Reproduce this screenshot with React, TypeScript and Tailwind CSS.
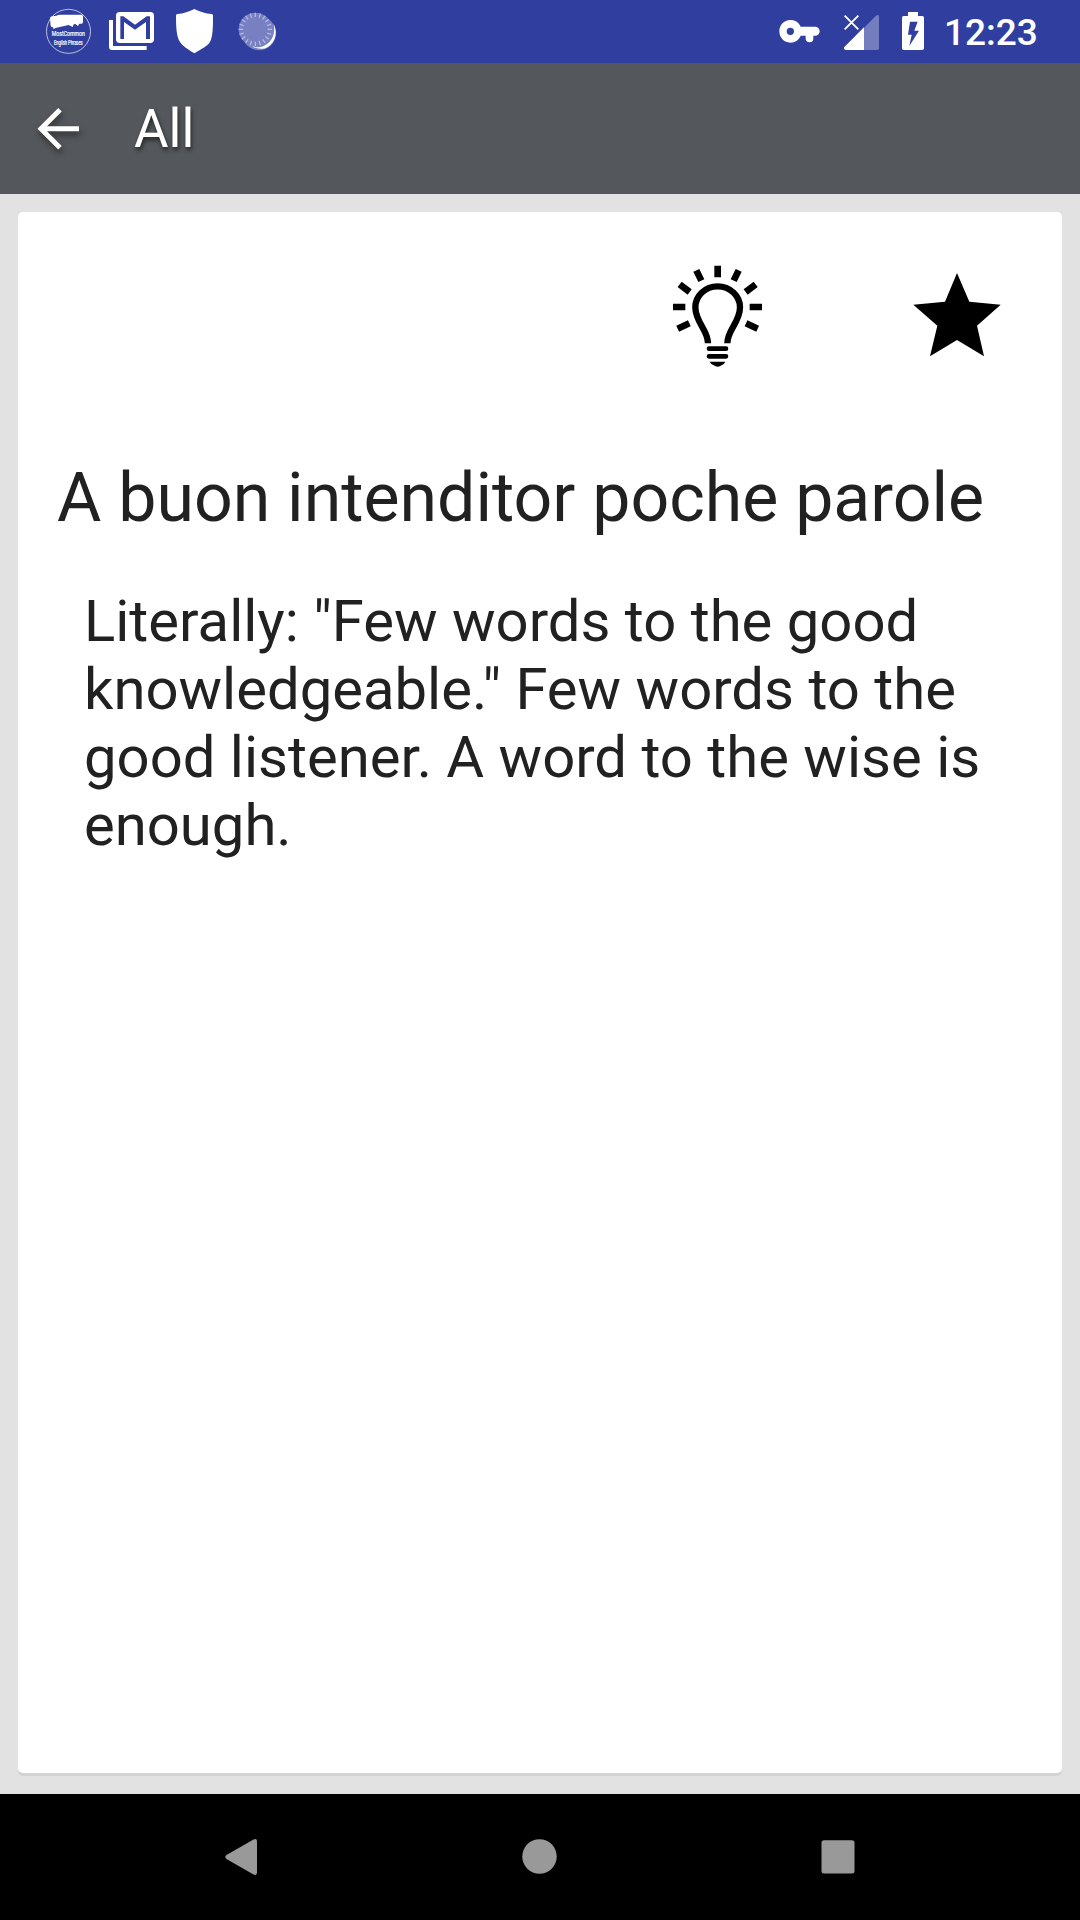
import React from 'react'

interface Phrase {
  category: string
  title: string
  meaning: string
}

const phrase: Phrase = {
  category: 'All',
  title: 'A buon intenditor poche parole',
  meaning:
    'Literally: "Few words to the good knowledgeable." Few words to the good listener. A word to the wise is enough.'
}

const rays = Array.from({ length: 20 }, (_, i) => i * 18)

const StatusBar: React.FC = () => (
  <div className="flex h-[63px] items-start bg-[#303f9f] text-white">
    {/* app logo */}
    <svg className="mt-2 ml-[45px] h-[47px] w-[47px] overflow-visible" viewBox="45 24 141 141">
      <circle cx="115.5" cy="94" r="66" fill="none" stroke="#fff" strokeOpacity="0.8" strokeWidth="2.5" />
      <path
        fill="#fff"
        d="M90 44h64q5 0 5 5v17q0 5-5 5h-6l-4 7-8-6-5 1-3 8-12-6-40 9-5 4-2-6q-6 0-7-5l-2-22q0-5 6-6l14-2q2-3 10-3z"
      />
      <g className="fill-white stroke-white text-[20px]" strokeWidth="0.6" textAnchor="middle">
        <text x="115" y="109" textLength="99" lengthAdjust="spacingAndGlyphs">
          MostCommon
        </text>
        <text x="115" y="135" textLength="86" lengthAdjust="spacingAndGlyphs">
          English Phrases
        </text>
      </g>
    </svg>
    {/* mail */}
    <svg className="mt-[11px] ml-4 h-10 w-[47px]" viewBox="234 33 141 120">
      <path fill="#fff" d="M237 60h12v78h101v12H247q-10 0-10-10z" />
      <path
        fill="#fff"
        fillRule="evenodd"
        d="M269 36h92q11 0 11 11v71q0 11-11 11h-92q-11 0-11-11V47q0-11 11-11zM271 49v68h11V66l33 23 33-23v51h12V49h-10l-35 25-35-25z"
      />
    </svg>
    {/* shield */}
    <svg className="mt-2 ml-5 h-[46px] w-[39px]" viewBox="435 24 117 138">
      <path
        fill="#fff"
        d="M493 27c15 8 33 14 52 15q4 1 4 5c0 32 0 62-9 79-6 11-26 21-47 34-21-13-36-23-43-34-11-17-12-47-12-79q0-4 4-5c19-1 36-7 51-15z"
      />
    </svg>
    {/* sync dial */}
    <svg className="mt-[11px] ml-[23px] h-10 w-10" viewBox="621 33 120 120">
      <circle cx="687" cy="100" r="51" fill="#fff" fillOpacity="0.35" />
      <path fill="#fff" d="M731 72c5 28-3 48-21 61-14 10-29 11-44 5 8 8 33 13 49 2 21-14 29-42 16-68z" />
      <circle cx="676" cy="88" r="50" fill="#7880c1" />
      <g stroke="#b4b8dd" strokeWidth="4">
        {rays.map(angle => (
          <path key={angle} d="M676 38v13" transform={`rotate(${angle} 676 88)`} />
        ))}
      </g>
    </svg>

    {/* vpn key */}
    <svg className="mt-[19px] ml-auto h-[25px] w-[43px]" viewBox="54 57 129 75">
      <path
        fill="#fff"
        fillRule="evenodd"
        d="M91 60c15 0 26 8 31 20h43c8 0 14 6 14 14s-6 13-11 13h-8v10c0 6-5 10-11 10s-12-4-12-10v-10h-15c-5 12-16 21-31 21-19 0-33-15-33-34s14-34 33-34zm0 23a11 11 0 1 0 0 22 11 11 0 0 0 0-22z"
      />
    </svg>
    {/* mobile signal */}
    <svg className="mt-[14px] ml-[22px] h-[37px] w-[37px]" viewBox="249 42 111 111">
      <path fill="#fff" fillOpacity="0.33" d="M312 83l36-36q9-5 9 4v94q0 5-5 5h-40z" />
      <path fill="#fff" d="M312 82v68h-55q-8-3-4-9z" />
      <path d="M254 47l41 41M295 47l-41 41" stroke="#fff" strokeWidth="5.5" />
    </svg>
    {/* battery */}
    <svg className="mt-[11px] ml-[21px] h-10 w-6" viewBox="423 33 72 120">
      <path
        fill="#fff"
        fillRule="evenodd"
        d="M444 36h30v12h13q5 0 5 5v92q0 5-5 5h-56q-5 0-5-5V53q0-5 5-5h13zM450 65l-6 39h11l-7 34 29-46h-14l10-27z"
      />
    </svg>
    <span className="mt-[11px] mr-[42px] ml-[19px] w-[94px] text-[37px] leading-[44px] font-medium">12:23</span>
  </div>
)

const AppBar: React.FC<{ title: string }> = ({ title }) => (
  <div className="flex h-[131px] items-start bg-[#54575b] text-white">
    <button aria-label="Back" className="mt-[41px] ml-[33px] h-12 w-12">
      <svg className="h-12 w-12 drop-shadow-[1px_4px_3px_rgba(0,0,0,0.45)]" viewBox="99 132 144 144">
        <path d="M180 149l-57 57 57 57M122 206h115" fill="none" stroke="#fff" strokeWidth="15" />
      </svg>
    </button>
    <h1 className="mt-[35px] ml-[53px] text-[53px] leading-[62px] [text-shadow:1px_3px_4px_rgba(0,0,0,0.6)]">
      {title}
    </h1>
  </div>
)

const PhraseCard: React.FC<Phrase> = ({ title, meaning }) => (
  <div className="flex-1 rounded-[5px] bg-white text-[#212121] shadow-[0_3px_0_#d3d3d3]">
    <div className="flex h-[246px] items-start justify-end pt-[52px] pr-[59px]">
      <button aria-label="Hint">
        <svg className="h-[104px] w-[95px]" viewBox="60 42 285 312">
          <g stroke="#000" strokeWidth="20">
            <path d="M203 47v35M69 171h37M299 171h37" />
            <path d="M139 61l15 31M266 61l-15 31M89 103l30 23M317 103l-30 23M83 236l35-16M323 236l-35-16" />
          </g>
          <path
            d="M174 280c0-40-38-63-38-108a67 63 0 0 1 134 0c0 45-38 68-38 108"
            fill="none"
            stroke="#000"
            strokeWidth="19"
          />
          <path d="M177 296h51M177 319h51" stroke="#000" strokeWidth="14" strokeLinecap="round" />
          <path d="M179 335h47q-3 7-11 11-5 4-12 4t-12-4q-9-4-12-11z" />
        </svg>
      </button>
      <button aria-label="Favourite" className="mt-[6px] ml-[146px]">
        <svg className="h-[90px] w-[92px]" viewBox="783 60 276 270">
          <path d="M921 69l37 86 94 9-71 63 21 92-81-49-81 49 22-92-72-63 95-9z" />
        </svg>
      </button>
    </div>
    <h2 className="ml-[39px] text-[68px] leading-[80px] whitespace-nowrap">{title}</h2>
    <p className="mt-[49px] mr-[60px] ml-[66px] text-[58px] leading-[68px]">{meaning}</p>
  </div>
)

const NavBar: React.FC = () => (
  <div className="flex h-[126px] items-start bg-black pt-11 text-[#999]">
    <svg className="ml-[224px] h-[38px] w-[34px]" viewBox="0 0 34 38" fill="currentColor">
      <path d="M2.5 17L29.5 1.5Q33 0 33 3.5V34.5Q33 38 29.5 36.5L2.5 21Q0 19 2.5 17z" />
    </svg>
    <svg className="ml-[263px] h-[38px] w-[38px]" viewBox="0 0 38 38" fill="currentColor">
      <circle cx="18.5" cy="18.5" r="17.25" />
    </svg>
    <svg className="ml-[261px] h-[38px] w-[38px]" viewBox="0 0 38 38" fill="currentColor">
      <rect x="1.5" y="2.2" width="33" height="33.3" rx="2.5" />
    </svg>
  </div>
)

export default function App() {
  return (
    <div className="flex h-[1920px] w-[1080px] flex-col overflow-hidden bg-[#e2e2e2] font-[Roboto,sans-serif]">
      <StatusBar />
      <AppBar title={phrase.category} />
      <div className="flex flex-1 flex-col px-[18px] pt-[18px] pb-[21px]">
        <PhraseCard {...phrase} />
      </div>
      <NavBar />
    </div>
  )
}
